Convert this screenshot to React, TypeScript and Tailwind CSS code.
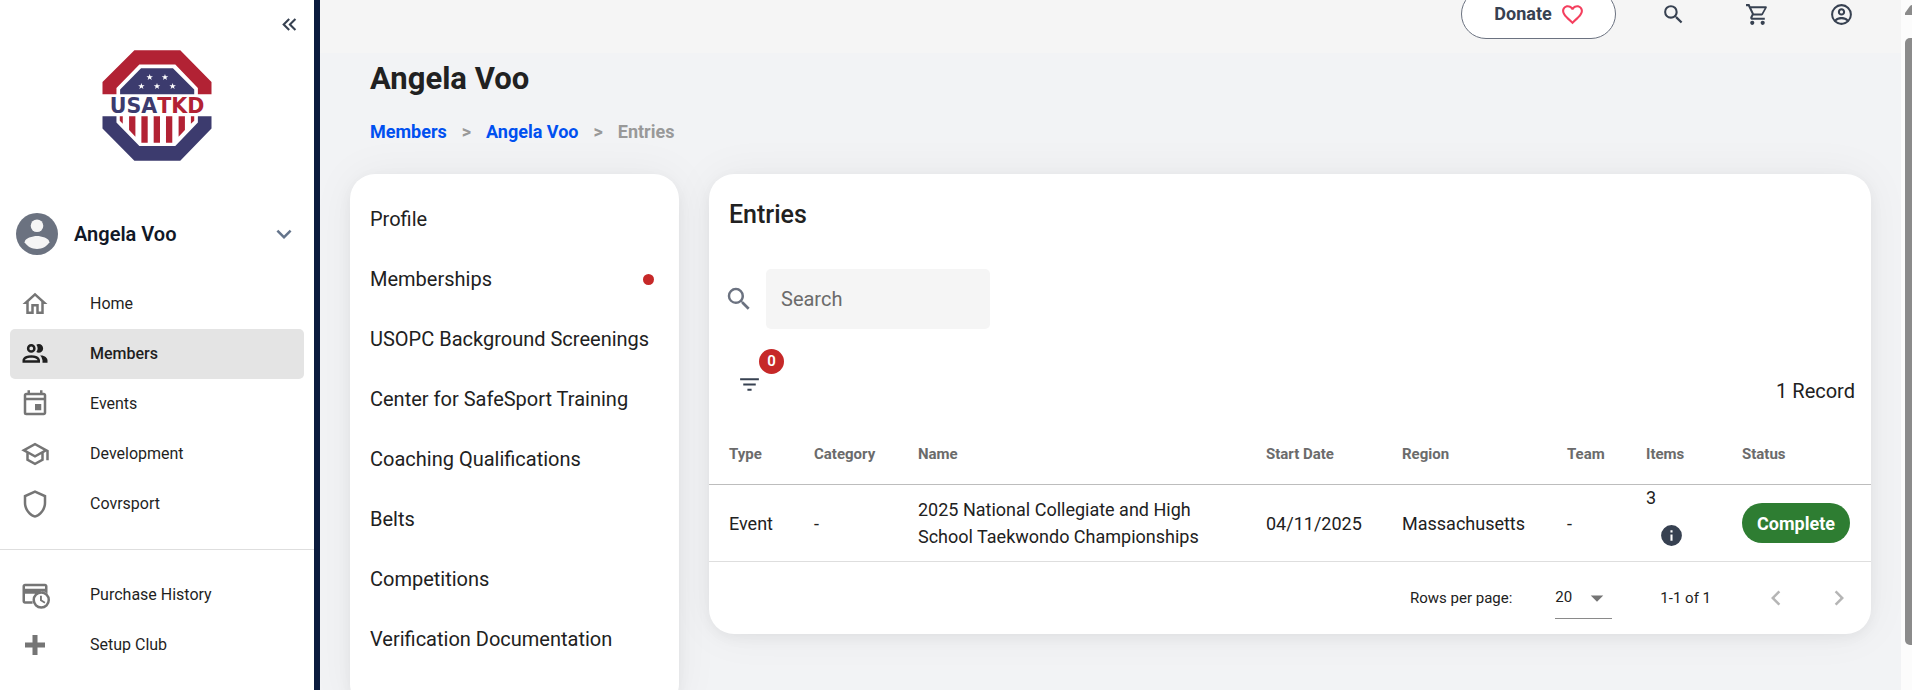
import { useState } from "react";

const icons = {
  home: "M12 5.69L17 10.19V18H15V12H9V18H7V10.19L12 5.69M12 3L2 12H5V20H11V14H13V20H19V12H22L12 3Z",
  members:
    "M13.07 10.41A5 5 0 0 0 13.07 4.59A3.39 3.39 0 0 1 15 4A3.5 3.5 0 0 1 15 11A3.39 3.39 0 0 1 13.07 10.41M5.5 7.5A3.5 3.5 0 1 1 9 11A3.5 3.5 0 0 1 5.5 7.5M7.5 7.5A1.5 1.5 0 1 0 9 6A1.5 1.5 0 0 0 7.5 7.5M16 17V19H2V17S2 13 9 13 16 17 16 17M14 17C13.86 16.22 12.67 15 9 15S4.07 16.31 4 17M15.95 13A5.32 5.32 0 0 1 18 17V19H22V17S22 13.37 15.94 13Z",
  events:
    "M19 3H18V1H16V3H8V1H6V3H5C3.89 3 3 3.9 3 5V19A2 2 0 0 0 5 21H19C20.1 21 21 20.1 21 19V5C21 3.9 20.1 3 19 3M19 19H5V9H19V19M19 7H5V5H19V7M12 12H17V17H12V12Z",
  school:
    "M12 3L1 9L5 11.18V17.18L12 21L19 17.18V11.18L21 10.09V17H23V9L12 3M18.82 9L12 12.72L5.18 9L12 5.28L18.82 9M17 16L12 18.72L7 16V12.27L12 15L17 12.27V16Z",
  shield:
    "M21 11C21 16.55 17.16 21.74 12 23C6.84 21.74 3 16.55 3 11V5L12 1L21 5V11M12 21C15.75 20 19 15.54 19 11.22V6.3L12 3.18L5 6.3V11.22C5 15.54 8.25 20 12 21Z",
  history:
    "M4 3C2.9 3 2 3.9 2 5V17C2 18.1 2.9 19 4 19H10.1A7 7 0 0 1 10.1 17H4V11H12.2A7 7 0 0 1 22 10.9V5C22 3.9 21.1 3 20 3H4M4 5H20V7H4V5M17 9A7 7 0 1 0 17 23A7 7 0 1 0 17 9M17 11A5 5 0 1 1 17 21A5 5 0 1 1 17 11M16 12.5V16.6L19.6 18.7L20.3 17.5L17.5 15.8V12.5H16Z",
  plus: "M20 14H14V20H10V14H4V10H10V4H14V10H20V14Z",
  heart:
    "M12.1,18.55L12,18.65L11.89,18.55C7.14,14.24 4,11.39 4,8.5C4,6.5 5.5,5 7.5,5C9.04,5 10.54,6 11.07,7.36H12.93C13.46,6 14.96,5 16.5,5C18.5,5 20,6.5 20,8.5C20,11.39 16.86,14.24 12.1,18.55M16.5,3C14.76,3 13.09,3.81 12,5.08C10.91,3.81 9.24,3 7.5,3C4.42,3 2,5.41 2,8.5C2,12.27 5.4,15.36 10.55,20.03L12,21.35L13.45,20.03C18.6,15.36 22,12.27 22,8.5C22,5.41 19.58,3 16.5,3Z",
  search:
    "M9.5,3A6.5,6.5 0 0,1 16,9.5C16,11.11 15.41,12.59 14.44,13.73L14.71,14H15.5L20.5,19L19,20.5L14,15.5V14.71L13.73,14.44C12.59,15.41 11.11,16 9.5,16A6.5,6.5 0 0,1 3,9.5A6.5,6.5 0 0,1 9.5,3M9.5,5C7,5 5,7 5,9.5C5,12 7,14 9.5,14C12,14 14,12 14,9.5C14,7 12,5 9.5,5Z",
  cart: "M17,18A2,2 0 0,1 19,20A2,2 0 0,1 17,22C15.89,22 15,21.1 15,20C15,18.89 15.89,18 17,18M1,2H4.27L5.21,4H20A1,1 0 0,1 21,5C21,5.17 20.95,5.34 20.88,5.5L17.3,11.97C16.96,12.58 16.3,13 15.55,13H8.1L7.2,14.63L7.17,14.75A0.25,0.25 0 0,0 7.42,15H19V17H7C5.89,17 5,16.1 5,15C5,14.65 5.09,14.32 5.24,14.04L6.6,11.59L3,4H1V2M7,18A2,2 0 0,1 9,20A2,2 0 0,1 7,22C5.89,22 5,21.1 5,20C5,18.89 5.89,18 7,18M16,11L18.78,6H6.14L8.5,11H16Z",
  account:
    "M12,2A10,10 0 0,0 2,12A10,10 0 0,0 12,22A10,10 0 0,0 22,12A10,10 0 0,0 12,2M7.07,18.28C7.5,17.38 10.12,16.5 12,16.5C13.88,16.5 16.5,17.38 16.93,18.28C15.57,19.36 13.86,20 12,20C10.14,20 8.43,19.36 7.07,18.28M18.36,16.83C16.93,15.09 13.46,14.5 12,14.5C10.54,14.5 7.07,15.09 5.64,16.83C4.62,15.5 4,13.82 4,12C4,7.59 7.59,4 12,4C16.41,4 20,7.59 20,12C20,13.82 19.38,15.5 18.36,16.83M12,6C10.06,6 8.5,7.56 8.5,9.5C8.5,11.44 10.06,13 12,13C13.94,13 15.5,11.44 15.5,9.5C15.5,7.56 13.94,6 12,6M12,11A1.5,1.5 0 0,1 10.5,9.5A1.5,1.5 0 0,1 12,8A1.5,1.5 0 0,1 13.5,9.5A1.5,1.5 0 0,1 12,11Z",
  collapse:
    "M18.41,7.41L17,6L11,12L17,18L18.41,16.59L13.83,12L18.41,7.41M12.41,7.41L11,6L5,12L11,18L12.41,16.59L7.83,12L12.41,7.41Z",
  down: "M7.41,8.58L12,13.17L16.59,8.58L18,10L12,16L6,10L7.41,8.58Z",
  left: "M15.41,16.58L10.83,12L15.41,7.41L14,6L8,12L14,18L15.41,16.58Z",
  right: "M8.59,16.58L13.17,12L8.59,7.41L10,6L16,12L10,18L8.59,16.58Z",
  filter: "M6,13H18V11H6M3,6V8H21V6M10,18H14V16H10V18Z",
  info: "M13,9H11V7H13M13,17H11V11H13M12,2A10,10 0 0,0 2,12A10,10 0 0,0 12,22A10,10 0 0,0 22,12A10,10 0 0,0 12,2Z",
  menuDown: "M7,10L12,15L17,10H7Z",
};

type IconName = keyof typeof icons;

function Icon({ name, className = "" }: { name: IconName; className?: string }) {
  return (
    <svg viewBox="0 0 24 24" fill="currentColor" aria-hidden="true" className={`shrink-0 ${className}`}>
      <path d={icons[name]} />
    </svg>
  );
}

const STAR = "M0 -10L2.4 -3.3L9.8 -3.2L3.9 1.3L6.1 8.300L0 4.1L-6.1 8.300L-3.9 1.3L-9.8 -3.2L-2.4 -3.3Z";

function Logo() {
  return (
    <svg viewBox="22 17 330 334" className="h-[111px] w-[110px]" role="img" aria-label="USA TKD">
      <path fill="#b22234" d="M23 150V113L119 18H257L351 113V150H310V131L242 61H134L65 131V150Z" />
      <path fill="#3c3b6e" d="M76 150V136L139 72H235L299 136V150Z" />
      <path fill="#3c3b6e" d="M23 216H65V235L134 306H242L310 235V216H351V253L257 350H119L23 253Z" />
      <g fill="#fff">
        <path d={STAR} transform="translate(165 99)" />
        <path d={STAR} transform="translate(211 99)" />
        <path d={STAR} transform="translate(140 126)" />
        <path d={STAR} transform="translate(187 126)" />
        <path d={STAR} transform="translate(234 126)" />
      </g>
      <path
        fill="#b22234"
        d="M75 216H84V239L75 230ZM103 216H122V278L103 258ZM140 216H159V296H140ZM177 216H196V296H177ZM214 216H233V296H214ZM252 216H271V258L252 278ZM289 216H299V230L289 239Z"
      />
      <text x="187" y="206" textAnchor="middle" fontSize="62" fontWeight="700" fontFamily="'DejaVu Sans', sans-serif">
        <tspan fill="#3c3b6e">USA</tspan>
        <tspan fill="#b22234">TKD</tspan>
      </text>
    </svg>
  );
}

type NavEntry = { label: string; icon: IconName; active?: boolean };

const mainNav: NavEntry[] = [
  { label: "Home", icon: "home" },
  { label: "Members", icon: "members", active: true },
  { label: "Events", icon: "events" },
  { label: "Development", icon: "school" },
  { label: "Covrsport", icon: "shield" },
];

const extraNav: NavEntry[] = [
  { label: "Purchase History", icon: "history" },
  { label: "Setup Club", icon: "plus" },
];

function NavList({ entries }: { entries: NavEntry[] }) {
  return (
    <ul className="px-[10px]">
      {entries.map((e) => (
        <li key={e.label}>
          <a
            href="#"
            aria-current={e.active ? "page" : undefined}
            className={
              e.active
                ? "flex h-[50px] items-center gap-10 rounded-[5px] bg-[#e4e4e4] pl-[10px] font-medium text-[#1f1f1f]"
                : "flex h-[50px] items-center gap-10 rounded-[5px] pl-[10px] text-[#1f1f1f]"
            }
          >
            <Icon name={e.icon} className={e.active ? "size-[30px]" : "size-[30px] text-[#757575]"} />
            {e.label}
          </a>
        </li>
      ))}
    </ul>
  );
}

function Sidebar() {
  return (
    <aside className="w-80 shrink-0 border-r-[6px] border-[#0b1b3d] bg-white">
      <div className="flex h-12 items-center justify-end pr-3">
        <button type="button" aria-label="Collapse menu" className="text-[#374151]">
          <Icon name="collapse" className="size-[25px]" />
        </button>
      </div>
      <div className="flex justify-center pt-[2px]">
        <Logo />
      </div>
      <button type="button" className="mt-[43px] flex h-[60px] w-full items-center gap-4 pr-[15px] pl-4">
        <svg viewBox="0 0 20 20" className="size-[42px] shrink-0" aria-hidden="true">
          <circle cx="10" cy="10" r="10" fill="#6b7280" />
          <circle cx="10" cy="6.1" r="3" fill="#f5f5f5" />
          <path fill="#f5f5f5" d="M4.1 13.9C4.1 12 8 11 10 11s5.900 1 5.900 2.900C14.700 15.900 12.500 17.100 10 17.100S5.300 15.900 4.100 13.900Z" />
        </svg>
        <span className="grow text-left text-xl font-semibold text-[#111827]">Angela Voo</span>
        <Icon name="down" className="size-[30px] text-[#64748b]" />
      </button>
      <nav aria-label="Main" className="mt-[15px]">
        <NavList entries={mainNav} />
        <hr className="my-5 border-[#dedede]" />
        <NavList entries={extraNav} />
      </nav>
    </aside>
  );
}

function TopBar() {
  return (
    <header className="-mt-[25px] flex h-[78px] shrink-0 items-center justify-end bg-[#f5f5f5] pr-[35px] text-[#374151]">
      <button
        type="button"
        className="mr-[32px] flex h-[50px] w-[155px] items-center justify-center gap-2 rounded-full border border-[#6b7280] bg-white pl-[2px] text-lg font-bold"
      >
        Donate
        <Icon name="heart" className="size-[25px] text-[#f43f5e]" />
      </button>
      <div className="flex gap-[34px]">
        <button type="button" aria-label="Search" className="flex size-[50px] items-center justify-center">
          <Icon name="search" className="size-[25px]" />
        </button>
        <button type="button" aria-label="Cart" className="flex size-[50px] items-center justify-center">
          <Icon name="cart" className="size-[25px]" />
        </button>
        <button type="button" aria-label="Account" className="flex size-[50px] items-center justify-center">
          <Icon name="account" className="size-[25px]" />
        </button>
      </div>
    </header>
  );
}

const profileMenu = [
  { label: "Profile" },
  { label: "Memberships", alert: true },
  { label: "USOPC Background Screenings" },
  { label: "Center for SafeSport Training" },
  { label: "Coaching Qualifications" },
  { label: "Belts" },
  { label: "Competitions" },
  { label: "Verification Documentation" },
];

const card = "rounded-[25px] bg-white shadow-[0_4px_14px_rgba(0,0,0,0.05),0_0_45px_rgba(0,0,0,0.05)]";

function ProfileMenu() {
  return (
    <nav aria-label="Member sections" className={`w-[329px] shrink-0 pt-[15px] pb-10 ${card}`}>
      <ul>
        {profileMenu.map((m) => (
          <li key={m.label}>
            <a href="#" className="flex h-[60px] items-center justify-between pr-[25px] pl-5 text-xl whitespace-nowrap">
              {m.label}
              {m.alert && <span className="size-[11px] rounded-full bg-[#c62828]" />}
            </a>
          </li>
        ))}
      </ul>
    </nav>
  );
}

const columns = [
  { label: "Type", width: "w-[85px]" },
  { label: "Category", width: "w-[104px]" },
  { label: "Name", width: "" },
  { label: "Start Date", width: "w-[136px]" },
  { label: "Region", width: "w-[165px]" },
  { label: "Team", width: "w-[79px]" },
  { label: "Items", width: "w-[96px]" },
  { label: "Status", width: "w-[149px]" },
];

function EntriesCard() {
  const [query, setQuery] = useState("");
  const [rows, setRows] = useState("20");
  return (
    <section className={`min-w-0 grow ${card}`}>
      <h2 className="px-5 pt-[26px] text-[25px] leading-[30px] font-medium">Entries</h2>
      <div className="mt-[39px] flex items-center gap-3 pl-[15px]">
        <label htmlFor="entry-search" className="text-[#6b7280]">
          <Icon name="search" className="size-[30px]" />
        </label>
        <input
          id="entry-search"
          type="text"
          aria-label="Search"
          placeholder="Search"
          value={query}
          onChange={(e) => setQuery(e.target.value)}
          className="h-[60px] w-56 rounded-[5px] bg-[#f5f5f5] px-[15px] text-xl placeholder:text-[#6b6b6b]"
        />
      </div>
      <div className="flex items-end justify-between pt-[30px] pr-4 pb-[15px] pl-[15px]">
        <button type="button" aria-label="Filters" className="relative flex size-[50px] items-center justify-center text-[#374151]">
          <Icon name="filter" className="size-[25px]" />
          <span className="absolute -top-[10px] -right-[10px] flex size-[25px] items-center justify-center rounded-full bg-[#c62828] text-[15px] font-semibold text-white">
            0
          </span>
        </button>
        <p className="text-xl leading-9">1 Record</p>
      </div>
      <table className="w-full table-fixed border-separate border-spacing-0 text-left text-lg leading-[27px]">
        <thead>
          <tr>
            {columns.map((c) => (
              <th
                key={c.label}
                scope="col"
                className={`h-[61px] border-b border-[#bdbdbd] p-0 pl-5 text-[15px] font-bold text-[#6b6b6b] ${c.width}`}
              >
                {c.label}
              </th>
            ))}
          </tr>
        </thead>
        <tbody>
          <tr className="[&>td]:h-[77px] [&>td]:border-b [&>td]:border-[#dedede] [&>td]:pl-5">
            <td>Event</td>
            <td>-</td>
            <td className="pr-5">2025 National Collegiate and High School Taekwondo Championships</td>
            <td>04/11/2025</td>
            <td>Massachusetts</td>
            <td>-</td>
            <td className="align-top">
              <div className="leading-[25px]">3</div>
              <button type="button" aria-label="Item details" className="flex size-[50px] items-center justify-center text-[#374151]">
                <Icon name="info" className="size-[25px]" />
              </button>
            </td>
            <td>
              <span className="inline-flex h-10 items-center rounded-full bg-[#2e7d32] px-[15px] font-bold text-white">
                Complete
              </span>
            </td>
          </tr>
        </tbody>
      </table>
      <div className="flex h-[72px] items-center justify-end pr-[7px] text-[15px]">
        <label htmlFor="rows-per-page">Rows per page:</label>
        <div className="relative ml-[43px] text-[#757575]">
          <select
            id="rows-per-page"
            value={rows}
            onChange={(e) => setRows(e.target.value)}
            className="h-[42px] w-[57px] appearance-none border-b border-[#8a8a8a] text-[#212121]"
          >
            <option>10</option>
            <option>20</option>
            <option>50</option>
          </select>
          <Icon name="menuDown" className="pointer-events-none absolute top-[6px] right-0 size-[30px]" />
        </div>
        <span className="ml-12">1-1 of 1</span>
        <div className="ml-10 flex gap-[13px] text-[#b5b5b5]">
          <button type="button" aria-label="Previous page" className="flex size-[50px] items-center justify-center">
            <Icon name="left" className="size-[30px]" />
          </button>
          <button type="button" aria-label="Next page" className="flex size-[50px] items-center justify-center">
            <Icon name="right" className="size-[30px]" />
          </button>
        </div>
      </div>
    </section>
  );
}

function Scrollbar() {
  return (
    <div aria-hidden="true" className="flex w-[11px] shrink-0 flex-col bg-[#fcfcfc] pt-[5px] pl-1">
      <svg viewBox="0 0 7 10" className="h-[10px] w-[7px]">
        <path fill="#8b8b8b" d="M0 10V8L5 1Q6 0 7 0V10Z" />
      </svg>
      <div className="mt-[23px] mb-[45px] grow rounded-l-[5px] bg-[#8b8b8b]" />
    </div>
  );
}

export default function App() {
  return (
    <div className="flex h-screen overflow-hidden bg-[#f2f3f5] font-[Roboto,sans-serif] text-base text-[#212121]">
      <Sidebar />
      <main className="flex min-w-0 grow flex-col overflow-hidden">
        <TopBar />
        <div className="px-[30px]">
          <h1 className="mt-[6px] pl-5 text-[31px] leading-10 font-bold">Angela Voo</h1>
          <nav aria-label="Breadcrumb" className="mt-[21px] pl-5">
            <ol className="flex gap-[15px] text-lg leading-6 font-bold text-[#999]">
              <li>
                <a href="#" className="text-[#0050f0]">Members</a>
              </li>
              <li aria-hidden="true">&gt;</li>
              <li>
                <a href="#" className="text-[#0050f0]">Angela Voo</a>
              </li>
              <li aria-hidden="true">&gt;</li>
              <li aria-current="page">Entries</li>
            </ol>
          </nav>
          <div className="mt-[30px] flex items-start gap-[30px]">
            <ProfileMenu />
            <EntriesCard />
          </div>
        </div>
      </main>
      <Scrollbar />
    </div>
  );
}
